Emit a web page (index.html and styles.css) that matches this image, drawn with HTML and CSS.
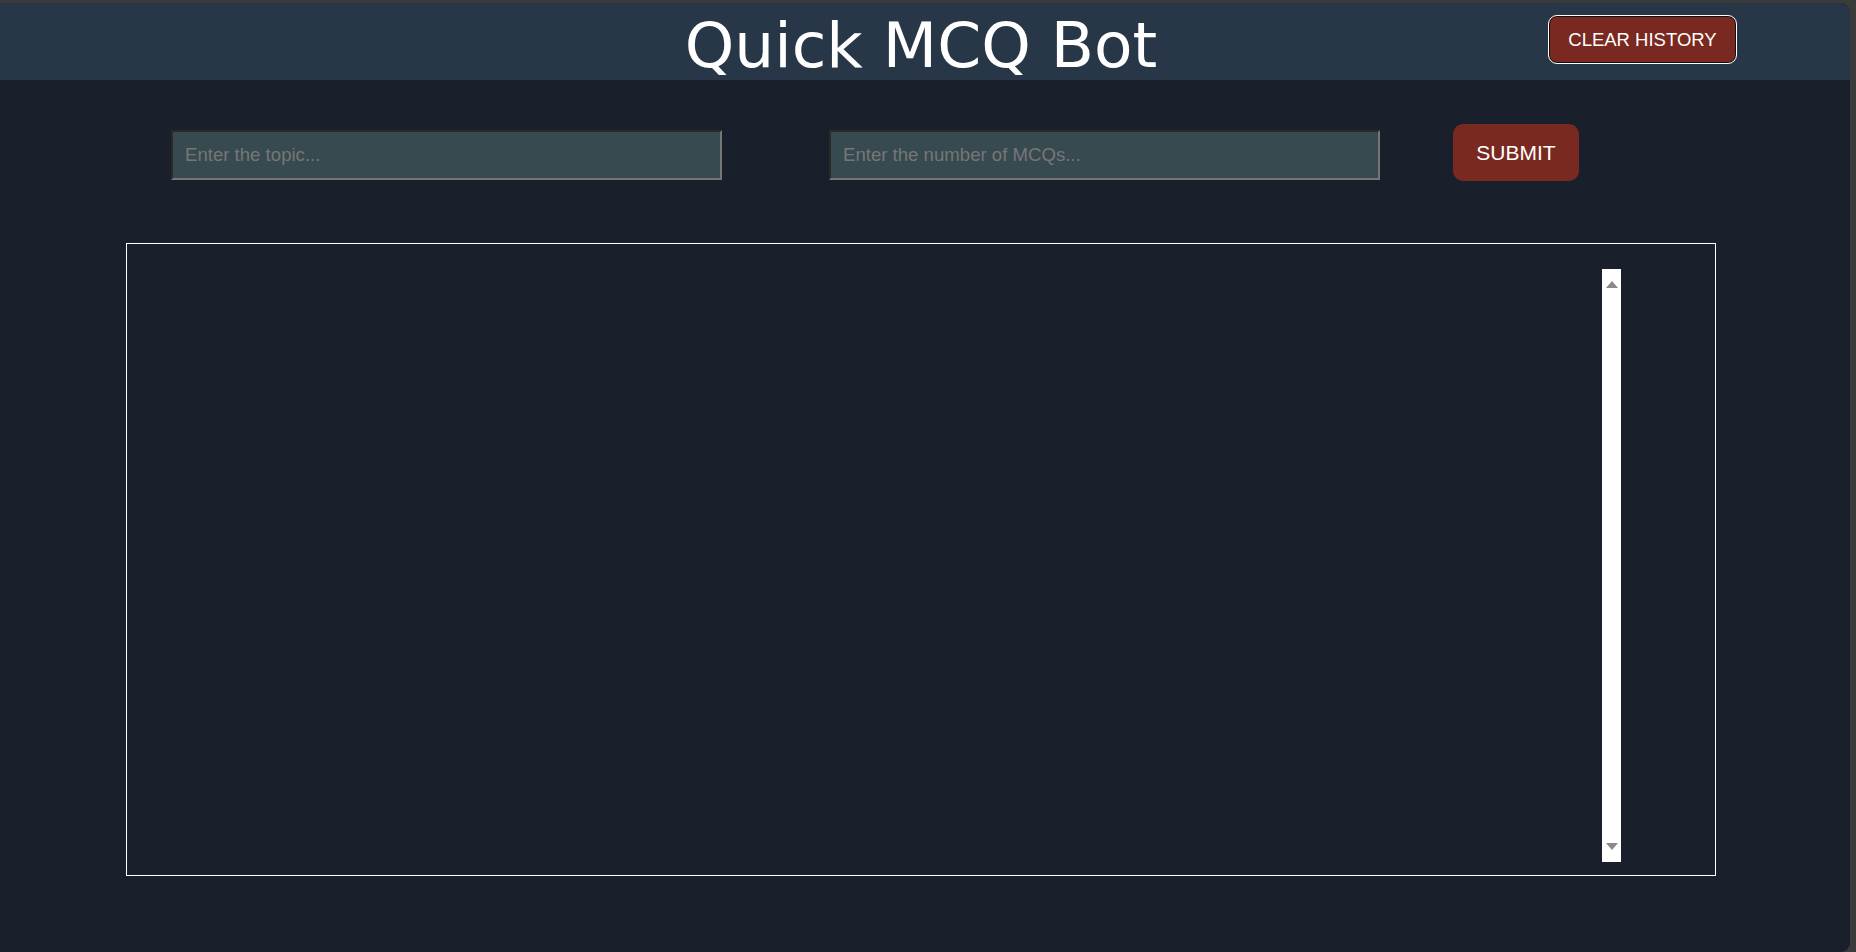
FILE: index.html
```html
<!DOCTYPE html>
<html lang="en">
<head>
<meta charset="utf-8">
<title>Quick MCQ Bot</title>
<link rel="stylesheet" href="styles.css">
</head>
<body>
<div class="window">
  <header class="header">
    <div class="spacer"></div>
    <h1 class="title">Quick MCQ Bot</h1>
    <div class="header-actions">
      <button class="btn-clear" type="button">CLEAR HISTORY</button>
    </div>
  </header>
  <main class="main">
    <form class="form-row">
      <input class="field" type="text" placeholder="Enter the topic...">
      <input class="field field-num" type="text" placeholder="Enter the number of MCQs...">
      <button class="btn-submit" type="button">SUBMIT</button>
    </form>
    <section class="output-box">
      <div class="output-content"></div>
      <div class="scrollbar">
        <span class="arrow-up"></span>
        <span class="arrow-down"></span>
      </div>
    </section>
  </main>
</div>
</body>
</html>
```

FILE: styles.css
```css
html, body {
  margin: 0;
  padding: 0;
}
body {
  background: #3b3b3b;
  width: 1856px;
  height: 952px;
  overflow: hidden;
  font-family: "Liberation Sans", Arial, sans-serif;
}
.window {
  margin-top: 3px;
  width: 1850px;
  height: 949px;
  background: #1a202b;
  border-radius: 0 9px 9px 0;
  overflow: hidden;
}
.header {
  height: 77px;
  background: #283748;
  display: grid;
  grid-template-columns: 1fr auto 1fr;
  align-items: start;
  border-top-right-radius: 9px;
}
.title {
  margin: 6px 8px 0 0;
  font-family: "DejaVu Sans", sans-serif;
  font-weight: normal;
  font-size: 63px;
  line-height: normal;
  color: #ffffff;
  white-space: nowrap;
}
.header-actions {
  display: flex;
  justify-content: flex-end;
  padding-top: 12px;
  padding-right: 113px;
}
.btn-clear {
  width: 189px;
  height: 49px;
  background: #7a2920;
  color: #ffffff;
  border: 1px solid #ffffff;
  box-shadow: inset 0 0 0 1px #111111;
  border-radius: 9px;
  font-family: "Liberation Sans", Arial, sans-serif;
  font-size: 18.5px;
  padding: 0;
}
.main {
  display: flex;
  flex-direction: column;
}
.form-row {
  display: flex;
  align-items: flex-start;
  margin: 44px 0 0 0;
  padding-left: 171px;
}
.field {
  box-sizing: border-box;
  width: 551px;
  height: 50px;
  margin-top: 6px;
  background: #374a50;
  border-style: solid;
  border-width: 2px;
  border-color: #2a2a2a #767676 #767676 #2a2a2a;
  padding: 0 12px;
  font-family: "Liberation Sans", Arial, sans-serif;
  font-size: 18.6px;
  color: #ffffff;
  outline: none;
}
.field::placeholder {
  color: #767676;
}
.field-num {
  margin-left: 107px;
}
.btn-submit {
  margin-left: 73px;
  width: 126px;
  height: 57px;
  background: #7a2920;
  color: #ffffff;
  border: none;
  border-radius: 10px;
  font-family: "Liberation Sans", Arial, sans-serif;
  font-size: 21px;
  padding: 0;
}
.output-box {
  box-sizing: border-box;
  margin: 62px 0 0 126px;
  width: 1590px;
  height: 633px;
  border: 1px solid #ffffff;
  display: flex;
  padding: 25px 94px 13px 0;
}
.output-content {
  flex: 1;
}
.scrollbar {
  width: 19px;
  background: #ffffff;
  display: flex;
  flex-direction: column;
  justify-content: space-between;
  align-items: center;
  padding: 12px 0;
}
.arrow-up {
  width: 0;
  height: 0;
  border-left: 6.5px solid transparent;
  border-right: 6.5px solid transparent;
  border-bottom: 7px solid #8a8a8a;
}
.arrow-down {
  width: 0;
  height: 0;
  border-left: 6.5px solid transparent;
  border-right: 6.5px solid transparent;
  border-top: 7px solid #8a8a8a;
}
```
